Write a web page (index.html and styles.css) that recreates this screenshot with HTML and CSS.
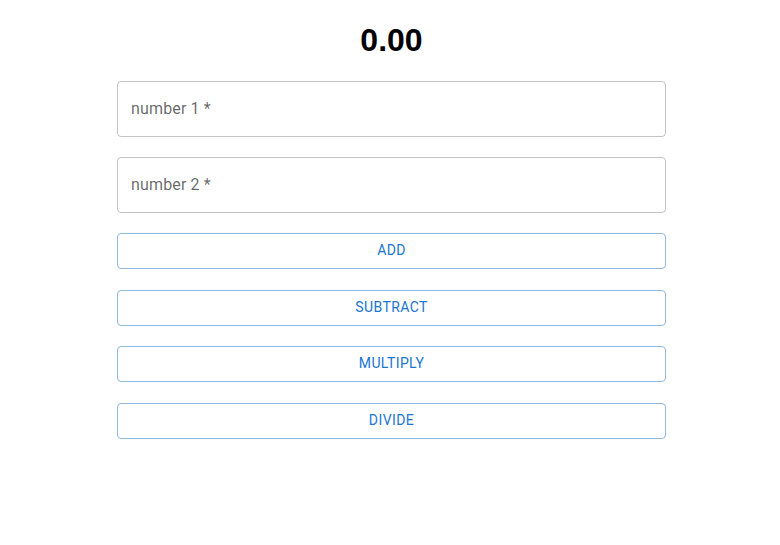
FILE: index.html
```html
<!DOCTYPE html>
<html>
<head>
<meta charset="utf-8">
<link rel="stylesheet" href="styles.css">
</head>
<body>
<div class="app">
  <h1 class="result">0.00</h1>
  <div class="field"><span class="label">number 1 *</span></div>
  <div class="field"><span class="label">number 2 *</span></div>
  <button class="btn">Add</button>
  <button class="btn">Subtract</button>
  <button class="btn">Multiply</button>
  <button class="btn">Divide</button>
</div>
</body>
</html>
```

FILE: styles.css
```css
html, body {
  margin: 0;
  background: #fff;
}
body {
  padding-left: 3px;
}
.app {
  width: 549px;
  margin: 0 auto;
  display: flex;
  flex-direction: column;
  gap: 20px;
  padding-top: 22px;
}
.result {
  margin: 0;
  font-family: "Liberation Sans", Arial, sans-serif;
  font-weight: bold;
  font-size: 32px;
  line-height: 37px;
  text-align: center;
  color: #000;
  margin-bottom: 2px;
}
.field {
  box-sizing: border-box;
  height: 56px;
  border: 1px solid rgba(0,0,0,0.23);
  border-radius: 4px;
  padding: 0 13px 2px;
  display: flex;
  align-items: center;
}
.label {
  font-family: Roboto, "Liberation Sans", sans-serif;
  font-size: 16px;
  color: rgba(0,0,0,0.6);
  letter-spacing: 0.00938em;
}
.btn {
  box-sizing: border-box;
  height: 36px;
  width: 100%;
  background: transparent;
  border: 1px solid rgba(25,118,210,0.5);
  border-radius: 4px;
  color: #1976d2;
  font-family: Roboto, "Liberation Sans", sans-serif;
  font-weight: 400;
  font-size: 14px;
  line-height: 24px;
  letter-spacing: 0.02857em;
  text-transform: uppercase;
  padding: 4px 15px 6px;
  margin: 0;
}
.btn + .btn {
  margin-top: 0.5px;
}
```
